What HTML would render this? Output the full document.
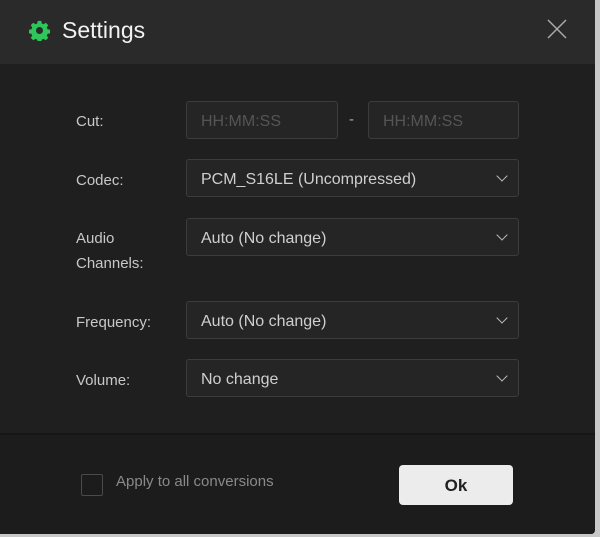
<!DOCTYPE html>
<html><head><style>
body{margin:0;width:600px;height:537px;background:#c8c8c8;overflow:hidden;font-family:"Liberation Sans",sans-serif;}
.win{position:absolute;left:0;top:0;width:595px;height:534px;background:#1f1f1f;border-radius:0 0 4px 0;overflow:hidden}
.hdr{position:absolute;left:0;top:0;width:595px;height:64px;background:#2a2a2a}
.title{position:absolute;left:62px;top:17px;font-size:23px;color:#f2f2f2}
.lbl{position:absolute;left:76px;color:#c8c8c8;font-size:15px;line-height:25px}
.box{position:absolute;height:38px;border:1px solid #3c3c3c;border-radius:3px;background:#252525;box-sizing:border-box;color:#cfcfcf;font-size:16px;line-height:39px;padding-left:14px}
.sel{left:186px;width:333px}
.sel:after{content:"";position:absolute;right:12px;top:12px;width:7px;height:7px;border-right:1.5px solid #bbb;border-bottom:1.5px solid #bbb;transform:rotate(45deg)}
.ph{color:#555;}
.foot{position:absolute;left:0;top:433px;width:595px;height:101px;background:#1c1c1c;border-top:2px solid #161616}
</style></head><body>
<div class="win">
<div class="hdr">
<svg style="position:absolute;left:29px;top:20px" width="21" height="21" viewBox="0 0 24 24"><path fill="#2fc55a" d="M10 1h4l.6 3 2 .9 2.6-1.7 2.8 2.8-1.7 2.6.9 2 3 .6v4l-3 .6-.9 2 1.7 2.6-2.8 2.8-2.6-1.7-2 .9-.6 3h-4l-.6-3-2-.9-2.6 1.7-2.8-2.8 1.7-2.6-.9-2-3-.6v-4l3-.6.9-2-1.7-2.6 2.8-2.8 2.6 1.7 2-.9zM12 8a4 4 0 100 8 4 4 0 000-8z"/></svg>
<div class="title">Settings</div>
<svg style="position:absolute;left:547px;top:19px" width="20" height="20" viewBox="0 0 20 20"><path d="M1 1L19 19M19 1L1 19" stroke="#aaa" stroke-width="1.5"/></svg>
</div>
<div class="lbl" style="top:109px">Cut:</div>
<div class="box ph" style="left:186px;top:101px;width:152px;">HH:MM:SS</div>
<div style="position:absolute;left:349px;top:111px;color:#aaa;font-size:15px">-</div>
<div class="box ph" style="left:368px;top:101px;width:151px;">HH:MM:SS</div>
<div class="lbl" style="top:168px">Codec:</div>
<div class="box sel" style="top:159px">PCM_S16LE (Uncompressed)</div>
<div class="lbl" style="top:226px">Audio<br>Channels:</div>
<div class="box sel" style="top:218px">Auto (No change)</div>
<div class="lbl" style="top:310px">Frequency:</div>
<div class="box sel" style="top:301px">Auto (No change)</div>
<div class="lbl" style="top:368px">Volume:</div>
<div class="box sel" style="top:359px">No change</div>
<div class="foot">
<div style="position:absolute;left:81px;top:39px;width:20px;height:20px;border:1.5px solid #4a4a4a;border-radius:2px"></div>
<div style="position:absolute;left:116px;top:38px;color:#8a8a8a;font-size:15px">Apply to all conversions</div>
<div style="position:absolute;left:399px;top:30px;width:114px;height:40px;background:#ececec;border-radius:4px;text-align:center;line-height:41px;font-weight:bold;font-size:17px;color:#222">Ok</div>
</div>
</div>
</body></html>
